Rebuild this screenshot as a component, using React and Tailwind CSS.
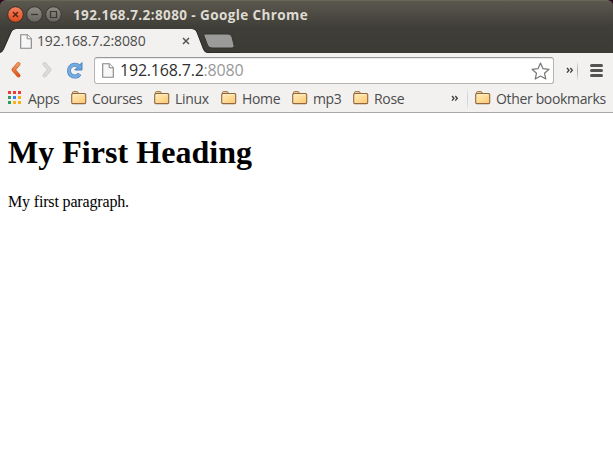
import React from "react";

function PageIcon({ className }) {
  return (
    <svg className={className} width="12" height="15" viewBox="0 0 12 15">
      <path d="M.7.7h6.6l4 4v9.600H.7z" fill="#f7f7f7" stroke="#858585" strokeWidth="1.1" />
      <path d="M7.200.7v4.100h4.100" fill="#fff" stroke="#858585" strokeWidth="1" />
    </svg>
  );
}

function Folder() {
  return (
    <svg className="shrink-0 -translate-y-px" width="16" height="14" viewBox="0 0 16 14">
      <defs>
        <linearGradient id="folder" x1="0" y1="0" x2="1" y2="1">
          <stop offset="0" stopColor="#ffefbd" />
          <stop offset="1" stopColor="#fcc66f" />
        </linearGradient>
      </defs>
      <path d="M1.500 3V1.600Q1.500.7 2.400.7h3.800q.8 0 .8.9V3" fill="#ffdf9b" stroke="#91683f" />
      <path d="M.7 3.600q0-1 1-1h12q1 0 1 1v8q0 1-1 1h-12q-1 0-1-1z" fill="url(#folder)" stroke="#91683f" strokeWidth="1.1" />
      <path d="M2 3.700h11.500" stroke="#fff3c9" />
    </svg>
  );
}

function Bookmark({ label, width }) {
  return (
    <div className={`flex shrink-0 items-center ${width}`}>
      <Folder />
      <span className="ml-[5px] whitespace-nowrap">{label}</span>
    </div>
  );
}

function Chevrons() {
  return (
    <svg className="shrink-0" width="8" height="7" viewBox="0 0 8 7">
      <path d="M1 1l2 2.300L1 5.600M4.300 1l2 2.300-2 2.300" fill="none" stroke="#3c3c3c" strokeWidth="1.3" />
    </svg>
  );
}

function WindowButtons() {
  return (
    <svg className="ml-[7px] shrink-0" width="56" height="18" viewBox="0 0 56 18">
      <defs>
        <linearGradient id="close" x1="0" y1="0" x2="0" y2="1">
          <stop offset="0" stopColor="#f58360" />
          <stop offset="1" stopColor="#df4b1c" />
        </linearGradient>
        <linearGradient id="control" x1="0" y1="0" x2="0" y2="1">
          <stop offset="0" stopColor="#908d84" />
          <stop offset="1" stopColor="#65635c" />
        </linearGradient>
      </defs>
      <circle cx="8.500" cy="8.500" r="7.800" fill="url(#close)" stroke="#353129" />
      <circle cx="27.500" cy="8.500" r="7.800" fill="url(#control)" stroke="#35342f" />
      <circle cx="46.500" cy="8.500" r="7.800" fill="url(#control)" stroke="#35342f" />
      <path d="M6 6l5 5M11 6l-5 5" stroke="#52200f" strokeWidth="1.400" />
      <path d="M24 8.500h7" stroke="#373631" strokeWidth="1.200" />
      <path d="M43.500 5.500h6v6h-6z" fill="none" stroke="#373631" strokeWidth="1.200" />
    </svg>
  );
}

const appColors = ["#ee3c34", "#ee3c34", "#ee3c34", "#2c9e59", "#3286ee", "#f7b315", "#2c9e59", "#f7b315", "#f7b315"];

export default function App() {
  return (
    <div className="flex h-[475px] w-[613px] flex-col overflow-hidden bg-white font-['Open_Sans','Noto_Sans',sans-serif] text-[#4c4c4c]">
      <div className="shrink-0 bg-[#2b0a20]">
        <header className="h-[53px] rounded-t-[6px] border-t border-[#686559] bg-linear-to-b from-[#5b584e] via-[#3f3e38] via-50% to-[#3b3a35]">
          <div className="flex h-7 items-center">
            <WindowButtons />
            <span className="ml-[10px] text-[13.5px] leading-5 font-bold tracking-[0.4px] whitespace-nowrap text-[#dfdbd2]">
              192.168.7.2:8080 - Google Chrome
            </span>
          </div>
          <div className="relative flex h-6">
            <svg className="absolute top-0 left-0" width="240" height="24" viewBox="0 0 240 24">
              <path d="M0 24Q3 23 4 20L11.500 3Q13 0 16 0H192Q195 0 196.500 3L203 20Q204.500 24 208 24Z" fill="#f2f1f0" />
              <path d="M0 23.500Q3 22 4 19L11 3Q12.500-.5 16-.5H192Q196-.5 197 3L203.500 20Q205 23.500 208 23.500H240" fill="none" stroke="#292824" strokeWidth=".8" />
              <path d="M205 5H228Q231 5 232 8L234 16Q235 19 232 19H212Q208.500 19 207.500 16L204 7Q203 5 205 5Z" fill="#9b9b99" stroke="#33322d" />
            </svg>
            <div className="relative flex w-[200px] items-center pl-5">
              <PageIcon />
              <span className="ml-[5px] w-[109px] text-[14px] leading-5 tracking-[-0.14px] whitespace-nowrap">192.168.7.2:8080</span>
              <svg className="ml-[36px]" width="8" height="8" viewBox="0 0 8 8">
                <path d="M1 1l6 6M7 1l-6 6" stroke="#555" strokeWidth="1.500" />
              </svg>
            </div>
          </div>
        </header>
      </div>

      <div className="flex h-[60px] shrink-0 flex-col border-b border-[#a9a9a7] bg-[#f2f1f0]">
        <div className="flex h-[35px] items-center">
          <svg className="shrink-0" width="94" height="35" viewBox="0 53 94 35">
            <defs>
              <linearGradient id="back" x1="0" y1="0" x2="0" y2="1">
                <stop offset="0" stopColor="#f3a064" />
                <stop offset="1" stopColor="#df541c" />
              </linearGradient>
            </defs>
            <path d="M18.500 64L13.500 69.800L18.500 75.500" fill="none" stroke="#c75f2b" strokeWidth="4" strokeLinecap="round" strokeLinejoin="round" />
            <path d="M18.500 64L13.500 69.800L18.500 75.500" fill="none" stroke="url(#back)" strokeWidth="2.600" strokeLinecap="round" strokeLinejoin="round" />
            <path d="M44.500 64L49.500 69.800L44.500 75.500" fill="none" stroke="#c9c8c7" strokeWidth="4" strokeLinecap="round" strokeLinejoin="round" />
            <path d="M44.500 64L49.500 69.800L44.500 75.500" fill="none" stroke="#dcdbda" strokeWidth="2.600" strokeLinecap="round" strokeLinejoin="round" />
            <path d="M79 66.500A5.900 5.900 0 1 0 79.700 74" fill="none" stroke="#4c83bd" strokeWidth="4" />
            <path d="M82 62.600V70H74.700Z" fill="#69a2dc" stroke="#4c83bd" strokeLinejoin="round" />
            <path d="M79 66.500A5.900 5.900 0 1 0 79.700 74" fill="none" stroke="#75abe1" strokeWidth="2.800" />
          </svg>
          <div className="flex h-[27px] w-[460px] items-center rounded-[3px] border border-[#b5b4b3] border-t-[#9b9a99] bg-white shadow-[inset_0_1px_1px_#e6e6e6]">
            <PageIcon className="ml-[7px] shrink-0" />
            <span className="mb-[2px] ml-[6px] text-[16px] leading-6 tracking-[-0.2px] whitespace-nowrap text-[#303030]">
              192.168.7.2<span className="text-[#999]">:8080</span>
            </span>
            <svg className="mr-[3px] ml-auto" width="19" height="18" viewBox="0 0 19 18">
              <path d="M9.500 1L12 6.700L18 7.300L13.500 11.300L14.800 17L9.500 14L4.200 17L5.500 11.300L1 7.300L7 6.700Z" fill="#fff" stroke="#777" strokeWidth="1.200" strokeLinejoin="round" />
            </svg>
          </div>
          <div className="ml-3 flex items-center">
            <Chevrons />
            <div className="ml-[3px] h-[18px] w-px bg-linear-to-b from-[#e7e7e7] via-[#aaa] to-[#e7e7e7]" />
            <div className="ml-[12px] flex w-[13px] flex-col gap-[2px]">
              <div className="h-[3px] rounded-full bg-[#535353]" />
              <div className="h-[3px] rounded-full bg-[#535353]" />
              <div className="h-[3px] rounded-full bg-[#535353]" />
            </div>
          </div>
        </div>
        <nav className="flex h-[21px] items-center pl-2 text-[14px] leading-5 tracking-[-0.34px]">
          <div className="flex w-[63px] items-center">
            <div className="grid w-[13px] -translate-y-px grid-cols-3 gap-[2px]">
              {appColors.map((color, index) => (
                <i key={index} className="size-[3px]" style={{ backgroundColor: color }} />
              ))}
            </div>
            <span className="ml-[7px]">Apps</span>
          </div>
          <Bookmark label="Courses" width="w-[83px]" />
          <Bookmark label="Linux" width="w-[67px]" />
          <Bookmark label="Home" width="w-[71px]" />
          <Bookmark label="mp3" width="w-[61px]" />
          <Bookmark label="Rose" width="w-[98px]" />
          <Chevrons />
          <div className="mr-[7px] ml-[8px] h-5 w-px bg-linear-to-b from-[#e8e8e8] via-[#c8d0d8] to-[#e8e8e8]" />
          <Bookmark label="Other bookmarks" width="w-[134px]" />
        </nav>
      </div>

      <main className="flex-1 px-2 font-['Liberation_Serif',serif] text-black">
        <h1 className="mt-[21px] text-[32px] leading-[37px] font-bold tracking-[0.03px]">My First Heading</h1>
        <p className="mt-[22px] text-base leading-[18px] tracking-[-0.16px]">My first paragraph.</p>
      </main>
    </div>
  );
}
